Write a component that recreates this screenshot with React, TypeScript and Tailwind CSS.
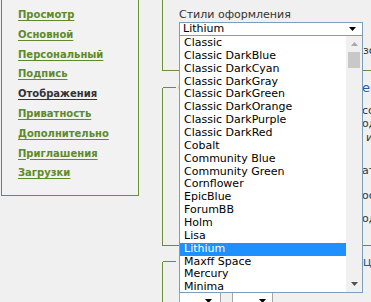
const links = [
  { label: "Просмотр" },
  { label: "Основной" },
  { label: "Персональный" },
  { label: "Подпись" },
  { label: "Отображения", active: true },
  { label: "Приватность" },
  { label: "Дополнительно" },
  { label: "Приглашения" },
  { label: "Загрузки" },
];

const styles = [
  "Classic",
  "Classic DarkBlue",
  "Classic DarkCyan",
  "Classic DarkGray",
  "Classic DarkGreen",
  "Classic DarkOrange",
  "Classic DarkPurple",
  "Classic DarkRed",
  "Cobalt",
  "Community Blue",
  "Community Green",
  "Cornflower",
  "EpicBlue",
  "ForumBB",
  "Holm",
  "Lisa",
  "Lithium",
  "Maxff Space",
  "Mercury",
  "Minima",
  "Morpheus",
];

function Arrow({ className }: { className: string }) {
  return (
    <svg width="7" height="4" viewBox="0 0 7 4" className={className}>
      <path d="M0 0h7L3.5 4z" fill="currentColor" />
    </svg>
  );
}

// box top edge with the title sitting on the line
function Legend({ title }: { title: string }) {
  return (
    <div className="-mt-[8px] flex h-[15px] items-center">
      <div className="h-px w-[13px] bg-[#6b8e3a]" />
      <span className="whitespace-nowrap px-[2px] text-[13px] leading-[15px] text-[#1f5ea8]">{title}</span>
      <div className="h-px flex-1 bg-[#6b8e3a]" />
    </div>
  );
}

function StyleList({ selected }: { selected: string }) {
  return (
    <div className="absolute left-[179px] top-[35px] flex h-[258px] w-[184px] border border-[#7f9db9] bg-white">
      <div className="flex-1 overflow-hidden pt-px">
        {styles.map((s) => (
          <div
            key={s}
            className={
              s === selected
                ? "h-[12.86px] whitespace-nowrap bg-[#1e90ff] pl-[4px] text-[11px] leading-[12.86px] text-white"
                : "h-[12.86px] whitespace-nowrap pl-[4px] text-[11px] leading-[12.86px] text-black"
            }
          >
            {s}
          </div>
        ))}
      </div>
      {/* scrollbar */}
      <div className="flex w-[16px] flex-col items-center bg-[#f0f0f0]">
        <Arrow className="mt-[6px] rotate-180 text-[#a8a8a8]" />
        <div className="mt-[6px] h-[16px] w-[12px] bg-[#c8c8c8]" />
        <div className="flex-1" />
        <Arrow className="mb-[6px] text-[#505050]" />
      </div>
    </div>
  );
}

export default function App() {
  return (
    <div className="relative flex h-[302px] w-[371px] overflow-hidden bg-[#f0f0f0] font-['DejaVu_Sans',sans-serif] text-[#333]">
      {/* left menu */}
      <div className="ml-px flex h-[196px] w-[138px] shrink-0 flex-col border-x border-b border-[#6b8e3a] bg-[#f2f2f2] pl-[16px] pt-[5px]">
        {links.map((l) => (
          <a
            key={l.label}
            href="#"
            className={
              l.active
                ? "h-[19.8px] text-[10px] font-bold leading-[19.8px] text-[#333] underline underline-offset-2"
                : "h-[19.8px] text-[10px] font-bold leading-[19.8px] text-[#5f8a2a] underline underline-offset-2"
            }
          >
            {l.label}
          </a>
        ))}
      </div>

      {/* right column */}
      <div className="ml-[23px] flex w-[260px] shrink-0 flex-col">
        <div className="flex h-[71px] shrink-0 border-b border-l border-[#6b8e3a] pl-[16px]">
          <div className="flex w-[184px] flex-col pt-[8px]">
            <div className="h-[13px] text-[11px] leading-[13px]">Стили оформления</div>
            <div className="mt-px flex h-[14px] items-center justify-between border border-[#7f9db9] bg-white pl-[3px] pr-[6px] text-[11px] text-black">
              <span>Lithium</span>
              <Arrow className="text-black" />
            </div>
          </div>
          <div className="mt-[44px] whitespace-nowrap text-[11px] leading-[13px]">зс</div>
        </div>

        <div className="mt-[17px] h-[158px] shrink-0 border-b border-l border-[#6b8e3a]">
          <Legend title="Отображение даты и времени" />
          <div className="ml-[199px] flex flex-col whitespace-nowrap text-[11px] leading-[12.5px]">
            <span className="mt-[10px]">сс</span>
            <span>од</span>
            <span className="ml-[4px] mt-[1.5px]">и</span>
            <span className="mt-[21px]">ат</span>
            <span className="mt-[12px]">ос</span>
            <span className="mt-[11px]">од</span>
          </div>
        </div>

        <div className="mt-[16px] h-[80px] shrink-0 border-l border-[#6b8e3a]">
          <Legend title="Настройки ленты и страницы" />
          <div className="ml-[16px] mt-[18px] flex gap-[11px]">
            <div className="flex h-[20px] w-[42px] items-end justify-end border border-[#a5a5a5] bg-white pb-[3px] pr-[8px]">
              <Arrow className="text-black" />
            </div>
            <div className="flex h-[20px] w-[41px] items-end justify-end border border-[#a5a5a5] bg-white pb-[3px] pr-[6px]">
              <Arrow className="text-black" />
            </div>
          </div>
        </div>
      </div>

      <StyleList selected="Lithium" />
    </div>
  );
}
